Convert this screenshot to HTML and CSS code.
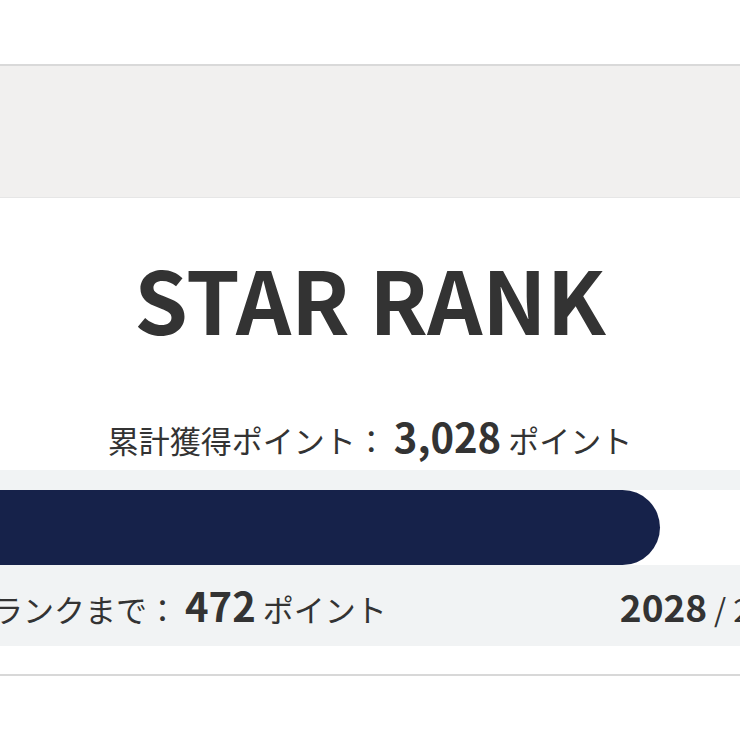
FILE: index.html
```html
<!DOCTYPE html>
<html lang="ja">
<head>
<meta charset="utf-8">
<link rel="stylesheet" href="styles.css">
</head>
<body>
<div class="page">
  <div class="banner"></div>
  <section class="rank">
    <h1 class="title">STAR RANK</h1>
    <p class="total">累計獲得ポイント： <strong class="num">3,028</strong> ポイント</p>
    <div class="progress">
      <div class="track"><div class="fill" style="width: 82.2%"></div></div>
      <div class="meta">
        <span class="next">次のランクまで： <strong class="num">472</strong> ポイント</span>
        <span class="ratio"><strong class="num num-sm">2028</strong> / 2500</span>
      </div>
    </div>
  </section>
</div>
</body>
</html>
```
FILE: styles.css
```css
html, body {
  margin: 0;
  padding: 0;
  background: #ffffff;
  overflow: hidden;
}
body {
  font-family: "Noto Sans CJK JP", "Noto Sans", sans-serif;
  color: #333333;
}
.page {
  width: 900px;
  margin-left: -80px;
  padding-top: 64px;
}
.banner {
  height: 131px;
  background: #f1f0ef;
  border-top: 2px solid #d9d9d9;
  border-bottom: 1px solid #e6e6e6;
}
.rank {
  border-bottom: 2px solid #d8d8d8;
  padding-bottom: 28px;
}
.title {
  margin: 0;
  padding-top: 48px;
  text-align: center;
  font-size: 86px;
  font-weight: 700;
  line-height: 1.2;
  letter-spacing: 0;
}
.total {
  margin: 63px 0 0;
  text-align: center;
  font-size: 31px;
  line-height: 1.2;
}
.num {
  font-size: 40px;
  font-weight: 700;
}
.num-sm {
  font-size: 37px;
}
.progress {
  margin-top: 10px;
  background: #f1f3f4;
  padding: 20px 0 0;
}
.track {
  height: 75px;
  background: #ffffff;
}
.fill {
  height: 100%;
  background: #16224a;
  border-radius: 0 37.5px 37.5px 0;
}
.meta {
  display: flex;
  justify-content: space-between;
  align-items: baseline;
  height: 81px;
  padding: 11px 18px 0 10px;
  box-sizing: border-box;
  font-size: 31px;
}
```
